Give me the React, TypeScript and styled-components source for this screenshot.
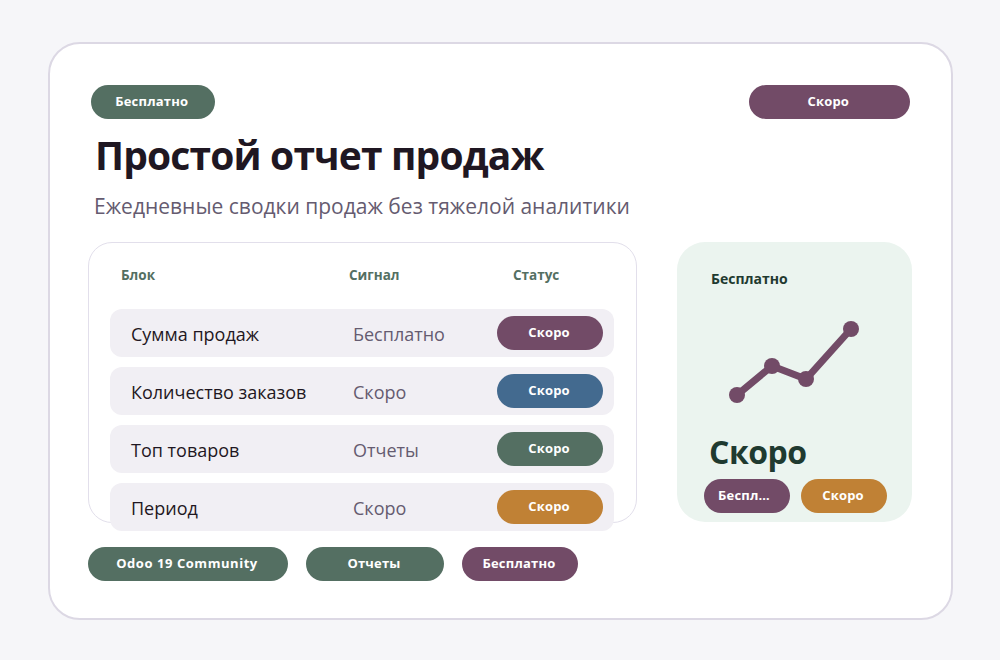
import styled, { createGlobalStyle } from 'styled-components'

const colors = {
  page: '#f6f6f9',
  border: '#dcd8e4',
  ink: '#1f1722',
  muted: '#655b70',
  plum: '#724b67',
  green: '#546f62',
  blue: '#436a8f',
  amber: '#c08135',
  row: '#f1eff4',
  mint: '#ebf4ef',
  deep: '#1f3a30',
}

const GlobalStyle = createGlobalStyle`
  html, body {
    margin: 0;
    padding: 0;
    background: ${colors.page};
    font-family: 'Open Sans', 'Noto Sans', sans-serif;
  }
`

const Page = styled.div`
  padding: 42px 48px 0;
  height: 660px;
  box-sizing: border-box;
`

const Card = styled.div`
  box-sizing: border-box;
  width: 905px;
  height: 578px;
  padding: 41px 38px 0;
  background: #fff;
  border: 2px solid ${colors.border};
  border-radius: 32px;
`

const TopRow = styled.div`
  display: flex;
  justify-content: space-between;
  margin: 0 3px 0 3px;
`

const Pill = styled.div<{ $bg: string; $w: number }>`
  box-sizing: border-box;
  width: ${(p) => p.$w}px;
  height: 34px;
  padding: 0 16px 0 14px;
  flex: none;
  border-radius: 17px;
  background: ${(p) => p.$bg};
  color: #fff;
  font-size: 13px;
  font-weight: 700;
  letter-spacing: 0.2px;
  line-height: 33px;
  text-align: center;
  white-space: nowrap;
  overflow: hidden;
  text-overflow: ellipsis;
`

const WidePill = styled(Pill)`
  letter-spacing: 0.55px;
`

const Title = styled.h1`
  margin: 9px 0 0 7px;
  color: ${colors.ink};
  font-size: 39px;
  font-weight: 700;
  letter-spacing: -0.85px;
  line-height: 54px;
`

const Subtitle = styled.p`
  margin: 8px 0 0 6px;
  color: ${colors.muted};
  font-size: 21px;
  line-height: 32px;
`

const Main = styled.div`
  display: grid;
  grid-template-columns: 549px 235px;
  gap: 40px;
  margin-top: 20px;
`

const TablePanel = styled.div`
  box-sizing: border-box;
  height: 281px;
  padding: 0 22px 0 21px;
  border: 1px solid #e2dfeb;
  border-radius: 24px;
`

const HeadRow = styled.div`
  display: grid;
  grid-template-columns: 228px 164px 1fr;
  padding: 22px 0 0 11px;
  height: 66px;
  box-sizing: border-box;
  color: ${colors.green};
  font-size: 13.5px;
  font-weight: 700;
  line-height: 20px;
`

const Rows = styled.div`
  display: flex;
  flex-direction: column;
  gap: 10px;
`

const Row = styled.div`
  display: grid;
  grid-template-columns: 222px 144px 106px;
  align-items: center;
  height: 48px;
  padding-left: 21px;
  border-radius: 12px;
  background: ${colors.row};
`

const BlockName = styled.span`
  padding-top: 2px;
  color: ${colors.ink};
  font-size: 18px;
`

const Signal = styled.span`
  padding-top: 2px;
  color: ${colors.muted};
  font-size: 18px;
`

const StatusPill = styled(Pill)`
  margin-top: -1px;
`

const SidePanel = styled.div`
  box-sizing: border-box;
  height: 280px;
  padding: 27px 26px 0 27px;
  border-radius: 28px;
  background: ${colors.mint};
`

const SideLabel = styled.div`
  margin-left: 7px;
  color: ${colors.deep};
  font-size: 14px;
  font-weight: 700;
  line-height: 20px;
`

const Chart = styled.svg`
  display: block;
  width: 140px;
  height: 100px;
  margin: 30px 0 0 23px;
`

const BigValue = styled.div`
  margin: 12px 0 6px 5px;
  color: ${colors.deep};
  font-size: 32px;
  font-weight: 700;
  letter-spacing: -0.5px;
  line-height: 42px;
`

const SideChips = styled.div`
  display: flex;
  gap: 11px;
`

const FooterChips = styled.div`
  display: flex;
  gap: 18px;
  margin-top: 24px;
`

const rows = [
  { name: 'Сумма продаж', signal: 'Бесплатно', color: colors.plum },
  { name: 'Количество заказов', signal: 'Скоро', color: colors.blue },
  { name: 'Топ товаров', signal: 'Отчеты', color: colors.green },
  { name: 'Период', signal: 'Скоро', color: colors.amber },
]

export default function App() {
  return (
    <Page>
      <GlobalStyle />
      <Card>
        <TopRow>
          <Pill $bg={colors.green} $w={123.5}>Бесплатно</Pill>
          <Pill $bg={colors.plum} $w={161.5}>Скоро</Pill>
        </TopRow>
        <Title>Простой отчет продаж</Title>
        <Subtitle>Ежедневные сводки продаж без тяжелой аналитики</Subtitle>
        <Main>
          <TablePanel>
            <HeadRow>
              <span>Блок</span>
              <span>Сигнал</span>
              <span>Статус</span>
            </HeadRow>
            <Rows>
              {rows.map((r) => (
                <Row key={r.name}>
                  <BlockName>{r.name}</BlockName>
                  <Signal>{r.signal}</Signal>
                  <StatusPill $bg={r.color} $w={106}>Скоро</StatusPill>
                </Row>
              ))}
            </Rows>
          </TablePanel>
          <SidePanel>
            <SideLabel>Бесплатно</SideLabel>
            <Chart viewBox="0 0 140 100">
              <polyline points="10,76 45,47 79,60 124,10" fill="none" stroke={colors.plum} strokeWidth="7" />
              <circle cx="10" cy="76" r="8" fill={colors.plum} />
              <circle cx="45" cy="47" r="8" fill={colors.plum} />
              <circle cx="79" cy="60" r="8" fill={colors.plum} />
              <circle cx="124" cy="10" r="8" fill={colors.plum} />
            </Chart>
            <BigValue>Скоро</BigValue>
            <SideChips>
              <Pill $bg={colors.plum} $w={86}>Бесплатно</Pill>
              <Pill $bg={colors.amber} $w={86}>Скоро</Pill>
            </SideChips>
          </SidePanel>
        </Main>
        <FooterChips>
          <WidePill $bg={colors.green} $w={200}>Odoo 19 Community</WidePill>
          <Pill $bg={colors.green} $w={138}>Отчеты</Pill>
          <Pill $bg={colors.plum} $w={116}>Бесплатно</Pill>
        </FooterChips>
      </Card>
    </Page>
  )
}
